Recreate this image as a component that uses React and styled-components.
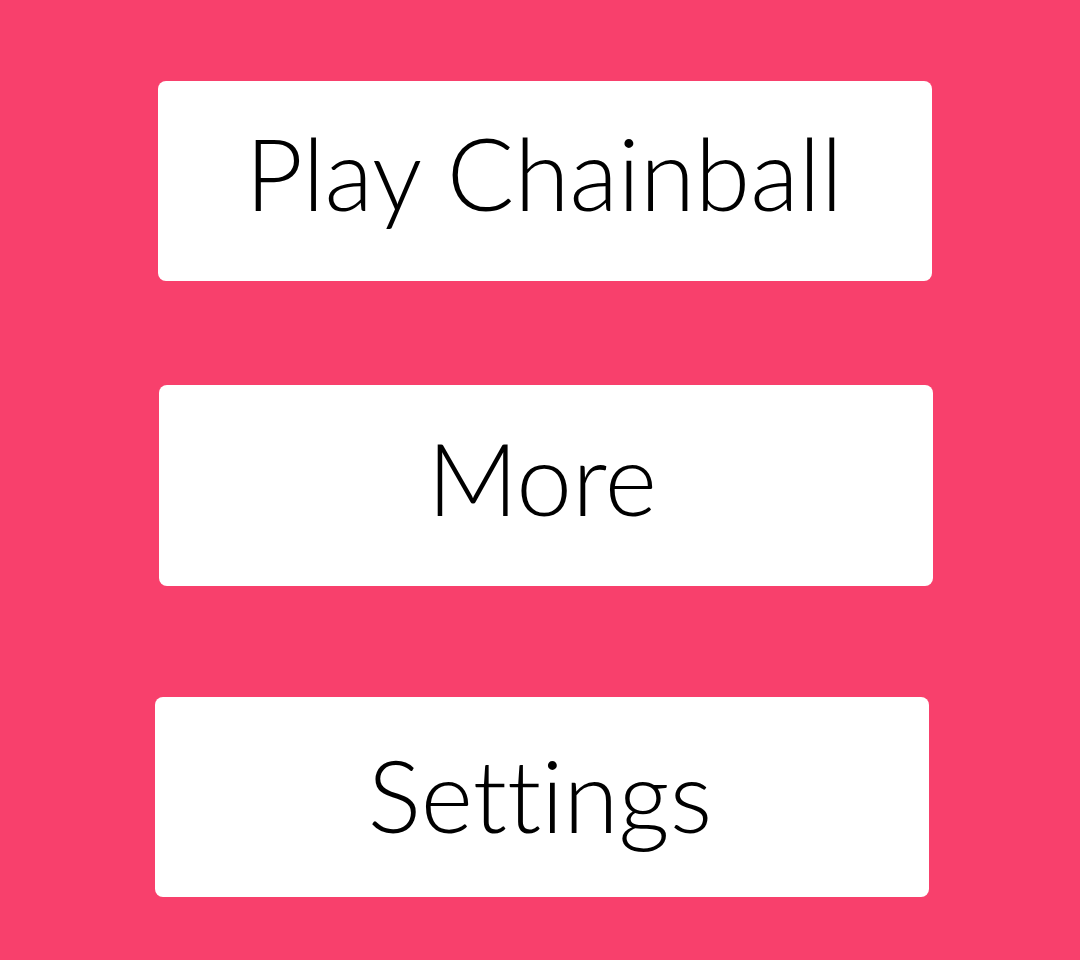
import React from "react";
import styled, { createGlobalStyle } from "styled-components";

const GlobalStyle = createGlobalStyle`
  html, body {
    margin: 0;
    padding: 0;
    background: #f8406c;
  }
`;

const Screen = styled.div`
  width: 1080px;
  height: 960px;
  background: #f8406c;
  display: flex;
  flex-direction: column;
  align-items: flex-start;
`;

const MenuButton = styled.button`
  width: 774px;
  height: ${(p) => p.$h || 200}px;
  margin-top: ${(p) => p.$top}px;
  margin-left: ${(p) => p.$left}px;
  border: none;
  border-radius: 8px;
  background: #ffffff;
  color: #000000;
  font-family: Lato, "Open Sans", sans-serif;
  font-weight: 300;
  font-size: 100px;
  line-height: 120px;
  font-variant-ligatures: none;
  display: flex;
  align-items: center;
  justify-content: center;
  padding: 0 ${(p) => p.$right || 0}px ${(p) => p.$lift}px 0;
  cursor: pointer;
`;

const items = [
  { label: "Play Chainball", top: 81, left: 158, h: 200, lift: 19, right: 2 },
  { label: "More", top: 104, left: 159, h: 201, lift: 18, right: 8 },
  { label: "Settings", top: 111, left: 155, h: 200, lift: 7, right: 4 },
];

export default function App() {
  return (
    <>
      <GlobalStyle />
      <Screen>
        {items.map((it) => (
          <MenuButton
            key={it.label}
            $top={it.top}
            $left={it.left}
            $h={it.h}
            $lift={it.lift}
            $right={it.right}
          >
            {it.label}
          </MenuButton>
        ))}
      </Screen>
    </>
  );
}
